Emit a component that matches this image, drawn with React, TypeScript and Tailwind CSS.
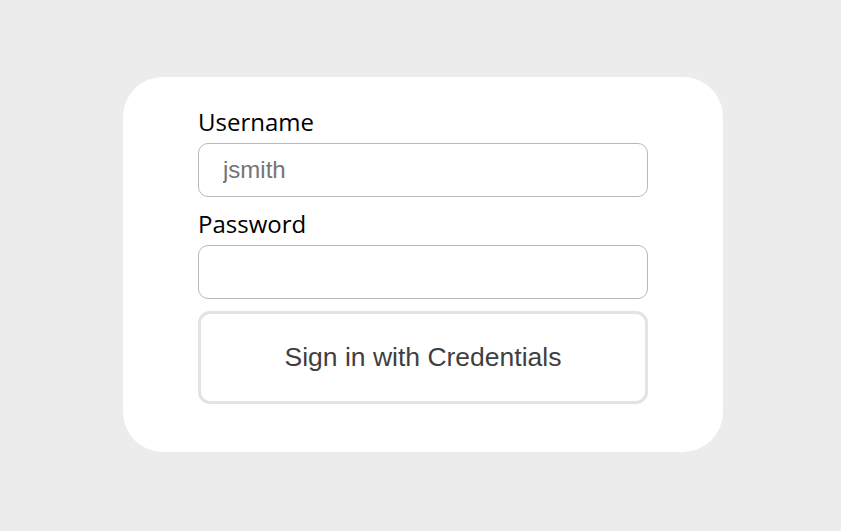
export default function App() {
	return (
		<div className="flex min-h-[531px] w-full items-center justify-center bg-[#ececec] pb-[2px] pl-[5px]">
			<form className="flex w-[600px] flex-col rounded-[40px] bg-white px-[75px] pt-[30px] pb-12">
				<label
					htmlFor="username"
					className="mb-[6px] font-['Open_Sans','Noto_Sans',sans-serif] text-[24px] leading-[30px] text-black"
				>
					Username
				</label>
				<input
					id="username"
					type="text"
					placeholder="jsmith"
					className="h-[54px] w-full rounded-[10px] border border-[#b8b8b8] bg-white px-6 font-['Liberation_Sans',Arial,sans-serif] text-[24px] text-[#333] outline-none placeholder:text-[#757575]"
				/>
				<label
					htmlFor="password"
					className="mt-3 mb-[6px] font-['Open_Sans','Noto_Sans',sans-serif] text-[24px] leading-[30px] text-black"
				>
					Password
				</label>
				<input
					id="password"
					type="password"
					className="h-[54px] w-full rounded-[10px] border border-[#b8b8b8] bg-white px-6 text-[24px] outline-none"
				/>
				<button
					type="button"
					className="mt-3 h-[93px] w-full rounded-[12px] border-[3px] border-[#e3e3e3] bg-white font-['Liberation_Sans',Arial,sans-serif] text-[26.5px] text-[#3f3f3f]"
				>
					Sign in with Credentials
				</button>
			</form>
		</div>
	);
}
